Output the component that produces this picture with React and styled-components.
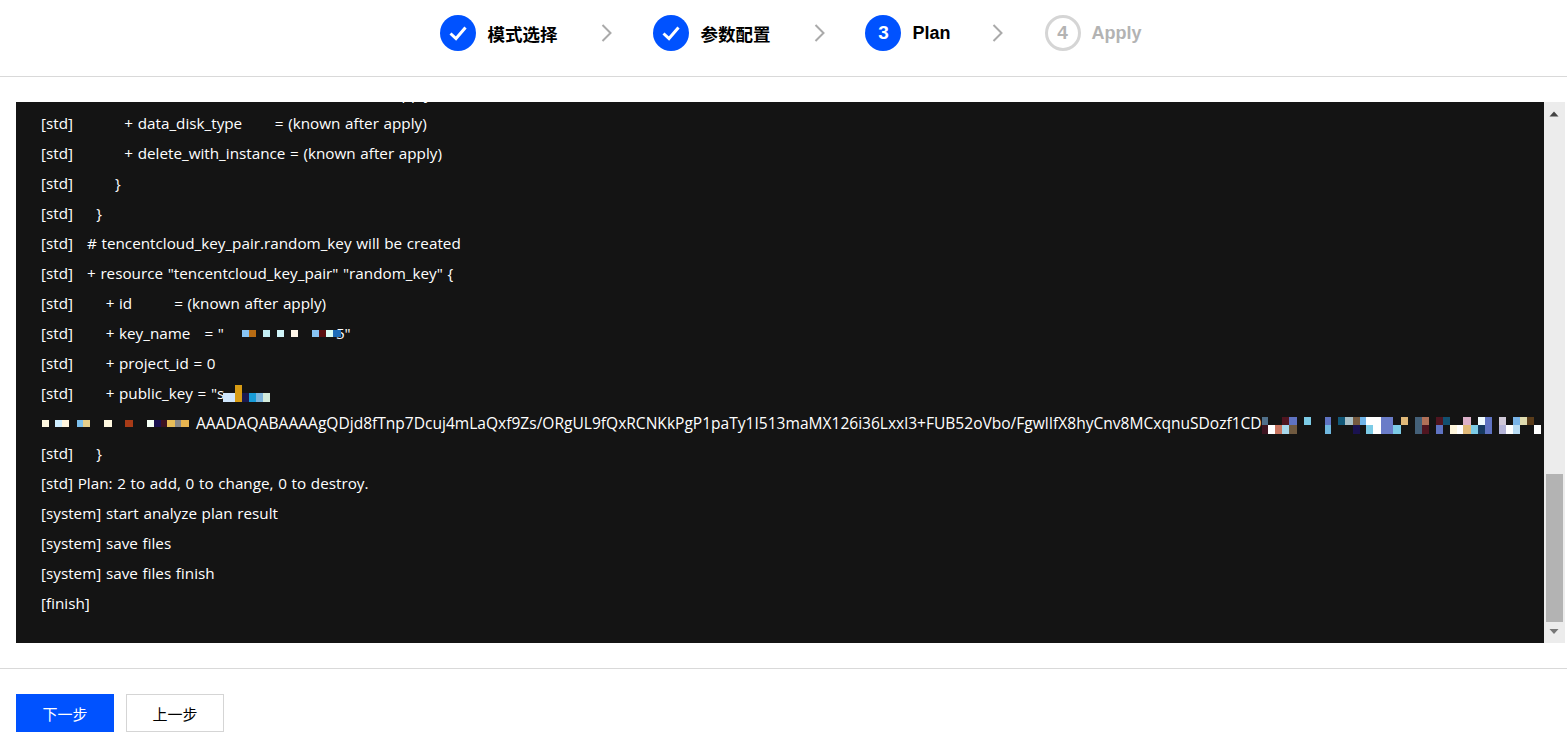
import React from "react";
import styled, { createGlobalStyle } from "styled-components";

const Global = createGlobalStyle`
  html, body { margin: 0; padding: 0; background: #fff; height: 100%; overflow: hidden; }
  #root { height: 100%; }
`;
const Page = styled.div`
  width: 1567px; height: 736px; display: flex; flex-direction: column; overflow: hidden;
  font-family: "Open Sans", "Noto Sans CJK SC", sans-serif; background: #fff;
`;
const StepBar = styled.div`
  height: 77px; flex: none; border-bottom: 1px solid #d9d9d9; display: flex; align-items: center; justify-content: center;
  padding: 0 0 10px 15px; box-sizing: border-box;
`;
const Step = styled.div`display: flex; align-items: center; height: 36px; gap: 11px;`;
const Circle = styled.div`
  width: 36px; height: 36px; border-radius: 50%; box-sizing: border-box; display: flex; align-items: center; justify-content: center;
  font: 700 19px "Liberation Sans", sans-serif;
  background: ${p => p.$off ? "#fff" : "#0052ff"};
  color: ${p => p.$off ? "#b3b3b3" : "#fff"};
  border: ${p => p.$off ? "3px solid #d5d5d5" : "none"};
`;
const StepLabel = styled.span`
  font: 700 ${p => p.$cjk ? "17.5px" : "18px"} "Liberation Sans", "Noto Sans CJK SC", sans-serif;
  color: ${p => p.$off ? "#b3b3b3" : "#000"};
`;
const Sep = styled.svg`
  width: 11px; height: 18px; flex: none;
  margin: 0 ${p => p.$right}px 0 ${p => p.$left}px;
`;
const Main = styled.div`
  flex: none; height: 592px; border-bottom: 1px solid #d9d9d9; padding: 25px 2px 25px 16px; box-sizing: border-box; display: flex;
`;
const Term = styled.div`flex: 1; background: #141414; overflow: hidden; height: 541px; min-width: 0;`;
const TermInner = styled.div`
  margin-top: -24px; padding-left: 25px; color: #fff; font: 400 15.25px/30px "Open Sans", sans-serif; white-space: pre; word-spacing: 0.7px;
`;
const Line = styled.div`height: 30px; display: flex; align-items: center;`;
const KeyText = styled.span`font-size: 15.55px; word-spacing: 0; margin-left: 7px;`;
const TailText = styled.span`margin-left: -5px;`;
const Mosaic = styled.svg`
  flex: none; display: block; position: relative;
  margin-left: ${p => p.$ml || 0}px; margin-top: ${p => p.$mt || 0}px;
`;
const Scroll = styled.div`width: 21px; height: 541px; background: #ececec; flex: none; display: flex; flex-direction: column; align-items: center;`;
const Thumb = styled.div`width: 17px; height: 148px; background: #b3b3b3; margin-top: auto;`;
const Arrow = styled.svg`width: 21px; height: 21px; flex: none; display: block;`;
const Footer = styled.div`display: flex; gap: 12px; padding: 25px 16px 0;`;
const Btn = styled.button`
  width: 98px; height: 38px; box-sizing: border-box; padding: 0; border-radius: 0; font: 400 15px "Noto Sans CJK SC", sans-serif;
  background: ${p => p.$primary ? "#0052ff" : "#fff"}; color: ${p => p.$primary ? "#fff" : "#000"};
  border: ${p => p.$primary ? "none" : "1px solid #d5d5d5"};
`;

const Check = () => (
  <svg width="20" height="20" viewBox="0 0 20 20" fill="none" stroke="#fff" strokeWidth="3">
    <path d="M2.5 10.5 L8 15.5 L17.5 4.5" />
  </svg>
);
const Chev = ({ left, right }) => (
  <Sep $left={left} $right={right} viewBox="0 0 11 18" fill="none" stroke="#aaa" strokeWidth="2">
    <path d="M1.5 1 L9.5 9 L1.5 17" />
  </Sep>
);

// Each block: [x, y, w, h, colour]
const m1 = [
  [0,0,7,7,"#fff8e0"],[13,0,7,7,"#cfeeff"],[20,0,7,7,"#fff6e0"],[35,0,6,7,"#7cc0ee"],[41,0,7,7,"#e6cf8c"],
  [62,0,8,7,"#fff8e0"],[83,0,8,7,"#a83b17"],[105,0,7,7,"#f5fff5"],[112,0,7,7,"#1a1250"],[119,0,6,7,"#3d1220"],
  [125,0,8,7,"#e8bd58"],[133,0,6,7,"#888"],[139,0,8,7,"#e8b550"],
];
const m2 = [
  [0,0,6,8,"#50708a"],[0,8,6,9,"#3d1420"],[6,8,7,9,"#fff"],[13,8,7,9,"#c87560"],[20,0,7,8,"#501520"],[20,8,7,9,"#a8d8ec"],
  [27,0,8,8,"#5f73c2"],[27,8,8,9,"#705a40"],[42,0,7,8,"#7ccbe6"],[63,0,6,8,"#5f73c2"],[63,8,6,9,"#70b8e0"],
  [76,0,7,8,"#125878"],[83,0,8,8,"#a8c0c8"],[91,0,7,8,"#755a40"],[91,8,7,9,"#1a1250"],[98,0,6,8,"#70b4e8"],
  [104,8,7,9,"#7ccbe6"],[104,0,15,8,"#fff"],[111,8,8,9,"#fff"],[119,0,12,17,"#6a7cc8"],
  [131,8,8,9,"#7ccbe6"],[139,0,7,8,"#e0b878"],
  [153,0,7,17,"#446078"],[160,0,7,8,"#b07058"],[160,8,7,9,"#501520"],
  [174,0,7,8,"#501520"],[174,8,7,9,"#5f73c2"],[181,0,7,8,"#125070"],[188,8,7,9,"#fff6dc"],[195,8,6,9,"#fff"],
  [201,0,8,8,"#dcb0c8"],[201,8,8,9,"#e0b878"],[209,8,7,9,"#7ccbe6"],[216,0,7,8,"#f0fcff"],[216,8,7,9,"#163a60"],
  [223,0,7,17,"#5f73c2"],
  [237,0,7,8,"#cfc8d8"],[237,8,7,9,"#b4b4d8"],[244,8,7,9,"#fff"],[251,0,7,8,"#78b4e8"],[251,8,7,9,"#b8dcf4"],
  [258,0,7,8,"#e0dcb0"],[265,0,7,8,"#5a3c1a"],[272,8,7,9,"#fff"],
];
const m3 = [
  [0,0,7,7,"#88c4f4"],[7,0,7,7,"#b86c14"],[21,0,7,7,"#c4eef4"],[35,0,7,7,"#d0f4f8"],[49,0,7,7,"#fff6e8"],
  [70,0,7,7,"#88c4f4"],[77,0,7,7,"#5a1010"],[84,0,7,7,"#d8fcf4"],[91,0,8,7,"#1c6cb8"],
];
const m4 = [
  [0,8,12,9,"#cfe6fc"],[12,0,7,17,"#d89c14"],[19,8,7,9,"#1a1a50"],[26,8,7,9,"#189cd8"],[33,8,7,9,"#7cb4dc"],[40,8,7,9,"#d4ecdc"],
];

const Blocks = ({ w, h, data, ml, mt }) => (
  <Mosaic $ml={ml} $mt={mt} width={w} height={h} viewBox={`0 0 ${w} ${h}`} shapeRendering="crispEdges">
    {data.map(([x, y, bw, bh, c], i) => <rect key={i} x={x} y={y} width={bw} height={bh} fill={c} />)}
  </Mosaic>
);

const lines = [
  "[std]           + data_disk_name       = (known after apply)",
  "[std]           + data_disk_type       = (known after apply)",
  "[std]           + delete_with_instance = (known after apply)",
  "[std]         }",
  "[std]     }",
  "[std]   # tencentcloud_key_pair.random_key will be created",
  "[std]   + resource \"tencentcloud_key_pair\" \"random_key\" {",
  "[std]       + id         = (known after apply)",
];

const TermBody = () => (
  <TermInner>
    {lines.map((l, i) => <Line key={i}>{l}</Line>)}
    <Line>
      {"[std]       + key_name   = \""}
      <Blocks w={99} h={7} data={m3} ml={18} mt={1} />
      <TailText>{"5\""}</TailText>
    </Line>
    <Line>{"[std]       + project_id = 0"}</Line>
    <Line>
      {"[std]       + public_key = \"s"}
      <Blocks w={47} h={17} data={m4} ml={-1} mt={1} />
    </Line>
    <Line>
      <Blocks w={147} h={7} data={m1} ml={1} mt={1} />
      <KeyText>AAADAQABAAAAgQDjd8fTnp7Dcuj4mLaQxf9Zs/ORgUL9fQxRCNKkPgP1paTy1I513maMX126i36Lxxl3+FUB52oVbo/FgwlIfX8hyCnv8MCxqnuSDozf1CD</KeyText>
      <Blocks w={279} h={17} data={m2} mt={5} />
    </Line>
    <Line>{"[std]     }"}</Line>
    <Line>{"[std] Plan: 2 to add, 0 to change, 0 to destroy."}</Line>
    <Line>{"[system] start analyze plan result"}</Line>
    <Line>{"[system] save files"}</Line>
    <Line>{"[system] save files finish"}</Line>
    <Line>{"[finish]"}</Line>
  </TermInner>
);

export default function App() {
  return (
    <Page>
      <Global />
      <StepBar>
        <Step><Circle><Check /></Circle><StepLabel $cjk>模式选择</StepLabel></Step>
        <Chev left={44} right={41} />
        <Step><Circle><Check /></Circle><StepLabel $cjk>参数配置</StepLabel></Step>
        <Chev left={44} right={40} />
        <Step><Circle>3</Circle><StepLabel>Plan</StepLabel></Step>
        <Chev left={41} right={42} />
        <Step><Circle $off>4</Circle><StepLabel $off>Apply</StepLabel></Step>
      </StepBar>
      <Main>
        <Term><TermBody /></Term>
        <Scroll>
          <Arrow viewBox="0 0 21 21"><path d="M5.5 14.5 L14.5 14.5 L10 9.5 Z" fill="#444" /></Arrow>
          <Thumb />
          <Arrow viewBox="0 0 21 21"><path d="M5.5 7 L14.5 7 L10 12 Z" fill="#777" /></Arrow>
        </Scroll>
      </Main>
      <Footer>
        <Btn $primary>下一步</Btn>
        <Btn>上一步</Btn>
      </Footer>
    </Page>
  );
}
